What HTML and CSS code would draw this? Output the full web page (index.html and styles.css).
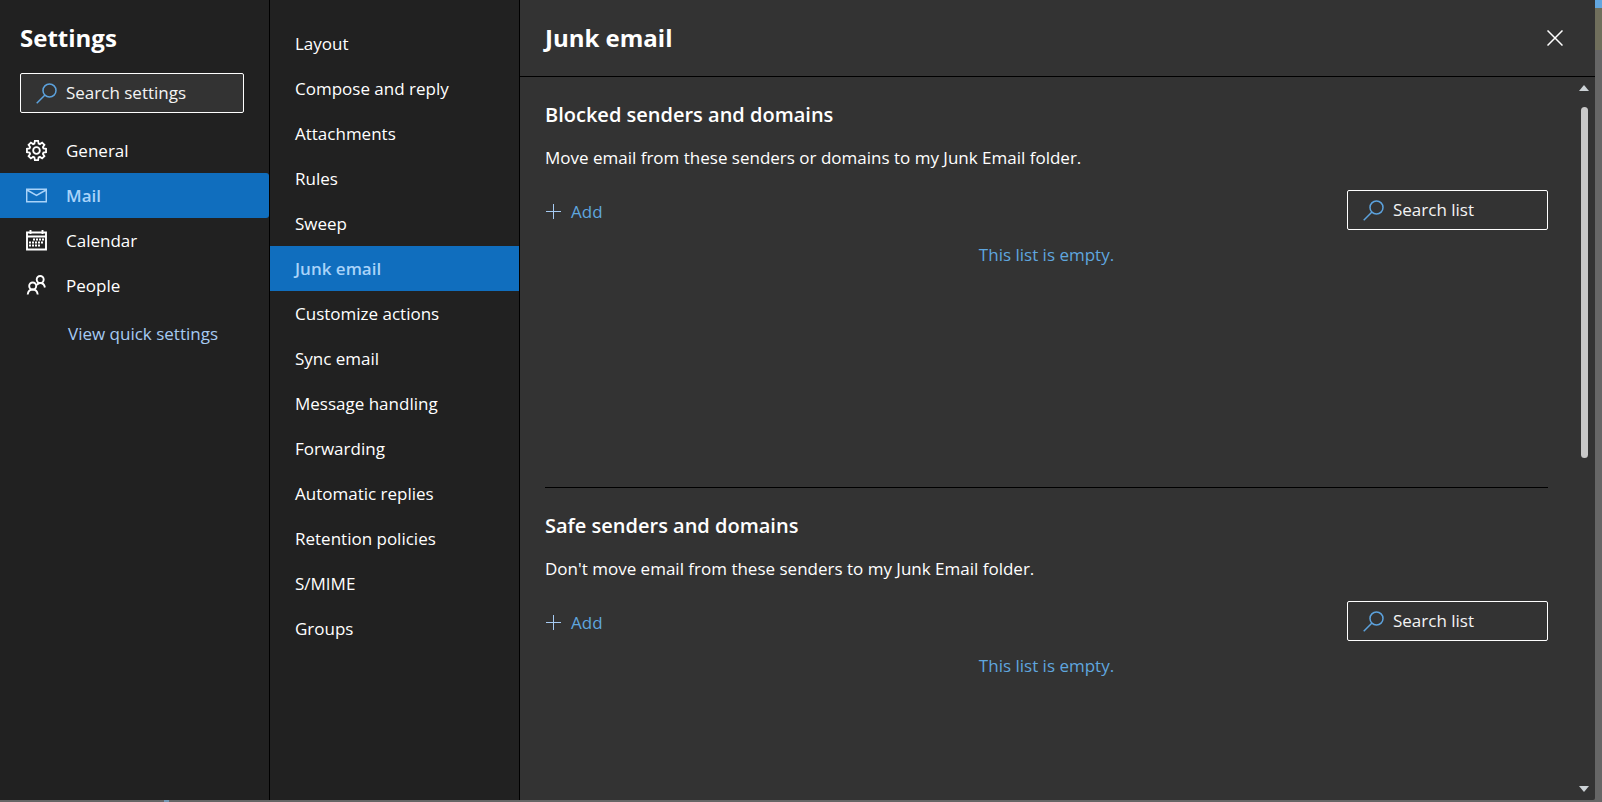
FILE: index.html
```html
<!DOCTYPE html>
<html lang="en">
<head>
<meta charset="utf-8">
<title>Settings - Junk email</title>
<link rel="stylesheet" href="styles.css">
</head>
<body>
<svg class="symbols" aria-hidden="true">
  <symbol id="i-search" viewBox="0 0 21 21"><circle cx="13.500" cy="7.500" r="6.500"/><path d="M9 12L.7 20.300"/></symbol>
  <symbol id="i-plus" viewBox="0 0 15 15"><path d="M7.500 0v15M0 7.500h15"/></symbol>
</svg>
<div class="backdrop">
  <span class="backdrop-top"></span>
  <span class="backdrop-bar"></span>
  <span class="backdrop-mark"></span>
  <div class="dialog" role="dialog" aria-label="Settings">
    <aside class="categories">
      <h1 class="title">Settings</h1>
      <label class="search search-settings">
        <svg class="search-icon" aria-hidden="true"><use href="#i-search"/></svg>
        <input type="text" placeholder="Search settings" aria-label="Search settings">
      </label>
      <nav class="category-list">
        <button class="category">
          <svg class="icon icon-bold" viewBox="0 0 22 22" aria-hidden="true"><path d="M8.8 3.700L9.300 1h3.400l.5 2.700 1.400.6 2.300-1.600 2.400 2.400-1.600 2.300.6 1.400 2.700.5v3.400l-2.700.5-.6 1.400 1.600 2.300-2.400 2.400-2.300-1.600-1.400.6-.5 2.700H9.300l-.5-2.700-1.400-.6-2.300 1.600-2.400-2.400 1.600-2.300-.6-1.400L1 12.700V9.300l2.700-.5.6-1.400-1.600-2.300 2.400-2.400 2.300 1.600z"/><circle cx="11" cy="11" r="3.500"/></svg>
          General
        </button>
        <button class="category category-active">
          <svg class="icon" viewBox="0 0 21 21" aria-hidden="true"><path d="M.7 4.200h19.600v12.600H.7zM1 5l9.500 5.500L20 5"/></svg>
          Mail
        </button>
        <button class="category">
          <svg class="icon icon-bold" viewBox="0 0 21 21" aria-hidden="true"><path d="M1 2.500h19v17H1zM1 6.500h19M4.500 0v4M16.500 0v4"/><path class="dots" d="M7 9.500h11M3 12.500h15M3 15.500h11"/></svg>
          Calendar
        </button>
        <button class="category">
          <svg class="icon icon-bold" viewBox="0 0 21 21" aria-hidden="true"><circle cx="14.200" cy="4.500" r="3.500"/><path d="M10.800 10c.8-1.300 2-2 3.400-2 2.500 0 4.200 1.700 4.700 4.500"/><circle cx="6.700" cy="11" r="3.500"/><path d="M1.700 19.500c.4-3.300 2.200-5 5-5s4.600 1.700 5 5"/></svg>
          People
        </button>
      </nav>
      <a class="quick-link" href="#">View quick settings</a>
    </aside>
    <nav class="pages">
      <button class="page">Layout</button>
      <button class="page">Compose and reply</button>
      <button class="page">Attachments</button>
      <button class="page">Rules</button>
      <button class="page">Sweep</button>
      <button class="page page-active">Junk email</button>
      <button class="page">Customize actions</button>
      <button class="page">Sync email</button>
      <button class="page">Message handling</button>
      <button class="page">Forwarding</button>
      <button class="page">Automatic replies</button>
      <button class="page">Retention policies</button>
      <button class="page">S/MIME</button>
      <button class="page">Groups</button>
    </nav>
    <main class="panel">
      <header class="panel-header">
        <h2 class="title">Junk email</h2>
        <button class="close" aria-label="Close"><svg viewBox="0 0 16 16" aria-hidden="true"><path d="M.5.5l15 15M15.500.5l-15 15"/></svg></button>
      </header>
      <div class="panel-body">
        <div class="sections">
          <section class="section">
            <h3 class="section-title">Blocked senders and domains</h3>
            <p class="section-text">Move email from these senders or domains to my Junk Email folder.</p>
            <div class="toolbar">
              <button class="add"><svg aria-hidden="true"><use href="#i-plus"/></svg>Add</button>
              <label class="search search-list">
                <svg class="search-icon" aria-hidden="true"><use href="#i-search"/></svg>
                <input type="text" placeholder="Search list" aria-label="Search blocked senders">
              </label>
            </div>
            <p class="empty">This list is empty.</p>
          </section>
          <section class="section">
            <h3 class="section-title">Safe senders and domains</h3>
            <p class="section-text">Don't move email from these senders to my Junk Email folder.</p>
            <div class="toolbar">
              <button class="add"><svg aria-hidden="true"><use href="#i-plus"/></svg>Add</button>
              <label class="search search-list">
                <svg class="search-icon" aria-hidden="true"><use href="#i-search"/></svg>
                <input type="text" placeholder="Search list" aria-label="Search safe senders">
              </label>
            </div>
            <p class="empty">This list is empty.</p>
          </section>
        </div>
        <div class="scrollbar" aria-hidden="true">
          <svg class="arrow" viewBox="0 0 10 6"><path d="M5 0l5 6H0z"/></svg>
          <div class="track"><div class="thumb"></div></div>
          <svg class="arrow" viewBox="0 0 10 6"><path d="M5 6L0 0h10z"/></svg>
        </div>
      </div>
    </main>
  </div>
</div>
</body>
</html>
```
FILE: styles.css
```css
* {
  box-sizing: border-box;
}

body {
  margin: 0;
  color: #fff;
  font: 17px/24px "Open Sans", "Noto Sans", sans-serif;
}

h1, h2, h3, p {
  margin: 0;
}

button, input {
  border: 0;
  padding: 0;
  background: none;
  color: inherit;
  font: inherit;
}

.symbols {
  position: absolute;
  width: 0;
  height: 0;
}

svg {
  flex: none;
  fill: none;
  stroke: currentColor;
}

.backdrop {
  position: relative;
  height: 100vh;
  padding: 0 7px 2px 0;
  background: #666;
}

.backdrop-top,
.backdrop-bar,
.backdrop-mark {
  position: absolute;
}

.backdrop-top {
  top: 0;
  right: 0;
  width: 7px;
  height: 8px;
  background: #62a6df;
}

.backdrop-bar {
  top: 8px;
  right: 0;
  width: 7px;
  height: 42px;
  background: #706f5c;
}

.backdrop-mark {
  bottom: 0;
  left: 164px;
  width: 5px;
  height: 2px;
  background: #7699b5;
}

.dialog {
  display: flex;
  height: 100%;
  overflow: hidden;
  border-radius: 0 0 2px 0;
  background: #333;
}

.title {
  font-size: 24px;
  line-height: 32px;
  font-weight: 700;
}

.categories {
  flex: none;
  width: 270px;
  padding-top: 22px;
  border-right: 1px solid #000;
  background: #212121;
}

.categories .title {
  padding-left: 20px;
}

.search {
  display: flex;
  align-items: center;
  gap: 9px;
  height: 40px;
  padding-left: 15px;
  border: 1px solid #fff;
  border-radius: 2px;
  background: #333;
}

.search input {
  flex: 1;
  min-width: 0;
  outline: 0;
}

.search input::placeholder {
  color: #f4f4f4;
  opacity: 1;
}

.search-icon {
  width: 21px;
  height: 21px;
  color: #5ca2dd;
  stroke-width: 1.5;
}

.search-settings {
  margin: 19px 25px 15px 20px;
}

.category-list,
.pages {
  display: flex;
  flex-direction: column;
}

.category {
  display: flex;
  align-items: center;
  gap: 19px;
  height: 45px;
  padding-left: 26px;
  text-align: left;
}

.category-active {
  border-radius: 0 3px 3px 0;
  background: #106ebe;
  color: #a9d3f9;
  font-weight: 600;
}

.icon {
  width: 21px;
  height: 21px;
  stroke-width: 1.5;
}

.icon-bold {
  stroke-width: 1.9;
}

.dots {
  stroke-width: 2;
  stroke-dasharray: 2 1;
}

.quick-link {
  display: block;
  padding: 14px 0 0 68px;
  color: #a6cbf3;
  text-decoration: none;
}

.pages {
  flex: none;
  width: 250px;
  padding-top: 21px;
  border-right: 1px solid #000;
  background: #212121;
}

.page {
  height: 45px;
  padding-left: 25px;
  text-align: left;
}

.page-active {
  background: #106ebe;
  color: #a9d3f9;
  font-weight: 600;
}

.panel {
  display: flex;
  flex: 1;
  flex-direction: column;
  min-width: 0;
}

.panel-header {
  display: flex;
  flex: none;
  align-items: center;
  justify-content: space-between;
  height: 77px;
  padding: 0 32px 1px 25px;
  border-bottom: 1px solid #000;
}

.close svg {
  display: block;
  width: 16px;
  height: 16px;
  stroke-width: 1.5;
}

.panel-body {
  display: flex;
  flex: 1;
  min-height: 0;
}

.sections {
  flex: 1;
  overflow: hidden;
  padding: 0 28px 0 25px;
}

.section {
  min-height: 411px;
  padding-top: 24px;
  border-bottom: 1px solid #000;
}

.section-title {
  font-size: 20px;
  line-height: 28px;
  font-weight: 600;
}

.section-text {
  margin: 17px 0 20px;
}

.toolbar {
  display: flex;
  align-items: center;
  justify-content: space-between;
  margin-bottom: 13px;
}

.add {
  display: flex;
  align-items: center;
  gap: 10px;
  padding: 3px 0 0 1px;
  color: #5fa6df;
}

.add svg {
  width: 15px;
  height: 15px;
  color: #a6cbf3;
}

.search-list {
  width: 201px;
}

.empty {
  color: #5fa6df;
  text-align: center;
}

.scrollbar {
  display: flex;
  flex: none;
  flex-direction: column;
  align-items: center;
  gap: 16px;
  width: 16px;
  margin-right: 3px;
  padding: 8px 0;
}

.arrow {
  width: 10px;
  height: 6px;
  fill: #ccd2d6;
  stroke: none;
}

.track {
  flex: 1;
  width: 7px;
}

.thumb {
  height: 53%;
  border-radius: 4px;
  background: #c8c8c8;
}
```
